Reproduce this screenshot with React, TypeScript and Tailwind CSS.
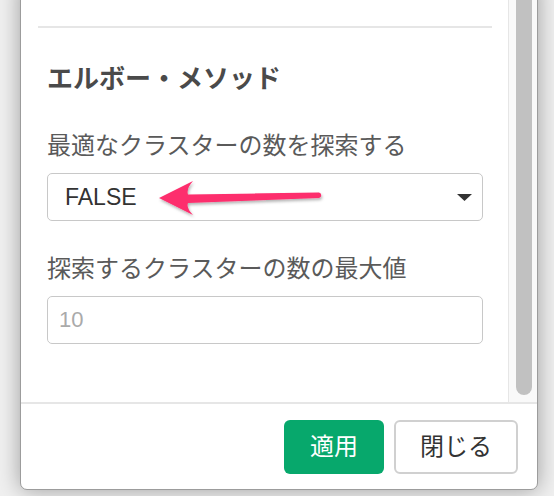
export default function App() {
  return (
    <div className="relative h-[496px] w-[554px] overflow-hidden bg-[#f0f0f0] font-['Liberation_Sans','Noto_Sans_CJK_JP',sans-serif]">
      <div className="-mt-[20px] ml-[20px] flex h-[510px] w-[518px] flex-col overflow-hidden rounded-[7px] border border-[#9c9c9c] bg-white shadow-[0_0_22px_rgba(0,0,0,0.35)]">
        {/* scrolling body */}
        <div className="flex h-[421px]">
          <div className="flex-1 pl-[17px] pr-[16px]">
            <div className="mt-[45px] h-[2px] bg-[#e6e6e6]" />
            <div className="px-[9px]">
              <h2 className="mt-[36px] text-[26px] leading-[30px] font-bold text-[#4a4a4a]">エルボー・メソッド</h2>
              <label className="mt-[38px] mb-[13px] block text-[24px] leading-[28px] text-[#5a5a5a]">
                最適なクラスターの数を探索する
              </label>
              <div className="flex h-[48px] items-center justify-between rounded-[5px] border border-[#c8c8c8] pl-[17px] pr-[10px]">
                <span className="text-[23px] leading-none text-[#333]">FALSE</span>
                <svg width="15" height="7" viewBox="0 0 15 7">
                  <path d="M0 0h15L7.5 7z" fill="#333" />
                </svg>
              </div>
              <label className="mt-[34px] mb-[13px] block text-[24px] leading-[28px] text-[#5a5a5a]">
                探索するクラスターの数の最大値
              </label>
              <div className="flex h-[48px] items-center rounded-[5px] border border-[#c8c8c8] px-[11px] text-[22px] leading-none text-[#aaa]">
                10
              </div>
            </div>
          </div>
          <div className="w-[29px] border-l border-[#e6e6e6] bg-[#f9f9f9] pb-[7px] pl-[7px]">
            <div className="h-full w-[16px] rounded-b-full bg-[#c1c1c1]" />
          </div>
        </div>
        {/* footer */}
        <div className="flex justify-end gap-[10px] border-t-2 border-[#e6e6e6] pt-[16px] pr-[19px] pb-[15px]">
          <button className="flex h-[54px] w-[100px] items-center justify-center rounded-[6px] bg-[#07a86c] text-[24px] text-white">
            適用
          </button>
          <button className="flex h-[54px] w-[124px] items-center justify-center rounded-[6px] border-2 border-[#d0d0d0] bg-white text-[24px] text-[#333]">
            閉じる
          </button>
        </div>
      </div>

      {/* annotation arrow */}
      <svg className="pointer-events-none absolute top-0 left-0" width="554" height="496" viewBox="0 0 554 496">
        <defs>
          <filter id="arrowShadow" x="-20%" y="-60%" width="140%" height="220%">
            <feDropShadow dx="1" dy="2" stdDeviation="1.5" floodColor="#000" floodOpacity="0.3" />
          </filter>
        </defs>
        <path
          d="M159 198 L193 181 Q186 189 188 194.5 L319 192.5 A2.8 2.8 0 0 1 319 198 L188 203 Q186 208 193 215 Z"
          fill="#fd2e6d"
          filter="url(#arrowShadow)"
        />
      </svg>
    </div>
  );
}
